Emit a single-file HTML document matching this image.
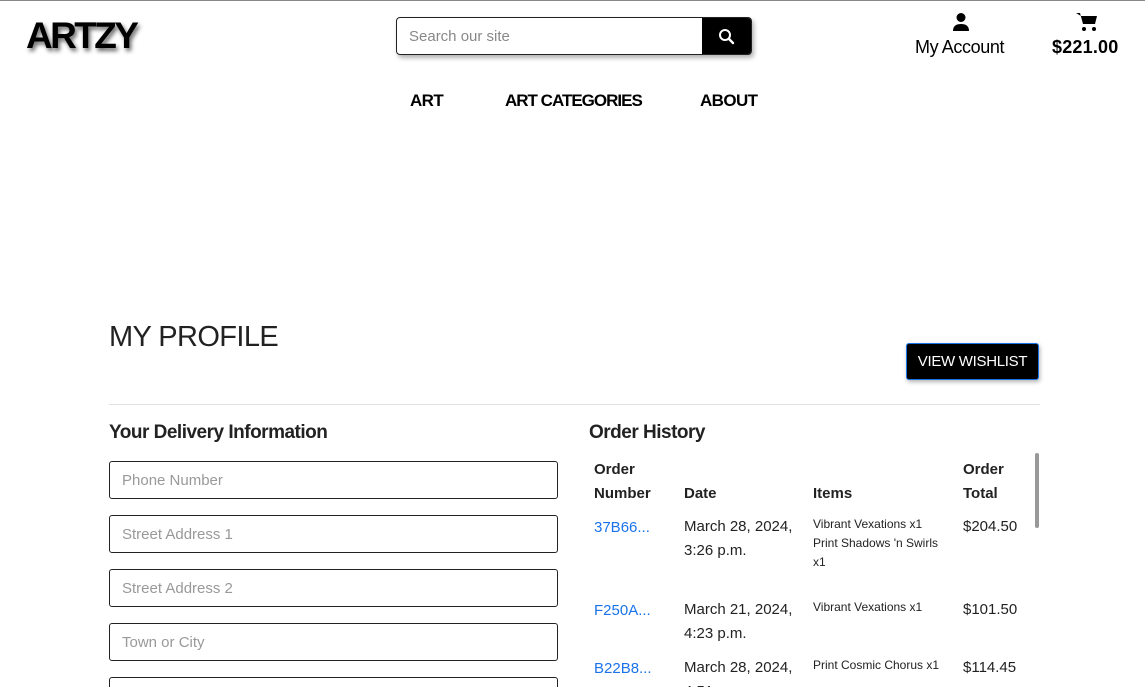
<!DOCTYPE html>
<html><head><meta charset="utf-8"><style>
*{box-sizing:border-box;margin:0;padding:0}
html,body{width:1145px;height:687px;overflow:hidden}
body{background:#fff;font-family:"Liberation Sans",sans-serif;color:#222;position:relative;border-top:1px solid #888}
.a{position:absolute;white-space:nowrap}
.logo{left:26px;top:14px;font-size:37px;font-weight:bold;color:#000;letter-spacing:-2.6px;text-shadow:2px 3px 4px rgba(0,0,0,.6)}
.search{left:396px;top:16px;width:356px;height:38px;border:1px solid #222;border-radius:4px;box-shadow:2px 3px 5px rgba(0,0,0,.3);overflow:hidden}
.search span{position:absolute;left:12px;top:10px;font-size:15px;color:#888}
.search b{position:absolute;right:0;top:0;width:49px;height:38px;background:#000}
.nav{top:90px;font-size:17px;font-weight:bold;color:#000;letter-spacing:-.6px}
.inp{position:absolute;left:109px;width:449px;height:38px;border:1px solid #222;border-radius:3px;font-size:15px;color:#999;padding:10px 12px}
.th{font-size:15px;font-weight:bold;color:#222;line-height:24px}
.td{font-size:15px;line-height:24px;color:#222}
.it{font-size:12px;line-height:19px;color:#222}
.lk{font-size:15px;color:#1a73e8}
</style></head><body>
<div class="a logo">ARTZY</div>
<div class="a search"><span>Search our site</span><b><svg width="49" height="38" viewBox="0 0 49 38"><circle cx="23" cy="17" r="5" fill="none" stroke="#fff" stroke-width="2"/><path d="M27 21l4 4" stroke="#fff" stroke-width="2.4" stroke-linecap="round"/></svg></b></div>
<svg class="a" style="left:951px;top:11px" width="20" height="20" viewBox="0 0 20 20"><circle cx="10" cy="5.5" r="4.5" fill="#000"/><path d="M2 19c0-5 3-7 8-7s8 2 8 7z" fill="#000"/></svg>
<div class="a" style="left:915px;top:36px;font-size:18px;color:#000;letter-spacing:-.4px">My Account</div>
<svg class="a" style="left:1075px;top:11px" width="24" height="20" viewBox="0 0 24 20"><path d="M1 1h4l3 11h12l2-8H6z" fill="#000"/><circle cx="9" cy="17" r="2" fill="#000"/><circle cx="19" cy="17" r="2" fill="#000"/></svg>
<div class="a" style="left:1052px;top:36px;font-size:18px;font-weight:bold;color:#000;letter-spacing:.2px">$221.00</div>
<div class="a nav" style="left:410px">ART</div>
<div class="a nav" style="left:505px;letter-spacing:-1px">ART CATEGORIES</div>
<div class="a nav" style="left:700px">ABOUT</div>
<div class="a" style="left:109px;top:320px;font-size:29px;color:#222;letter-spacing:-.6px">MY PROFILE</div>
<div class="a" style="left:906px;top:342px;width:133px;height:37px;background:#000;border:1px solid #1a73e8;border-radius:3px;color:#fff;font-size:15px;text-align:center;line-height:35px;box-shadow:1px 2px 4px rgba(0,0,0,.3);letter-spacing:-.3px">VIEW WISHLIST</div>
<div class="a" style="left:109px;top:403px;width:931px;height:1px;background:#e2e2e2"></div>
<div class="a" style="left:109px;top:421px;font-size:19px;font-weight:bold;letter-spacing:-.5px">Your Delivery Information</div>
<div class="inp" style="top:460px">Phone Number</div>
<div class="inp" style="top:514px">Street Address 1</div>
<div class="inp" style="top:568px">Street Address 2</div>
<div class="inp" style="top:622px">Town or City</div>
<div class="inp" style="top:676px"></div>
<div class="a" style="left:589px;top:421px;font-size:19px;font-weight:bold;letter-spacing:-.5px">Order History</div>
<div class="a" style="left:1035px;top:452px;width:4px;height:75px;background:#999;border-radius:2px"></div>
<div class="a th" style="left:594px;top:457px">Order<br>Number</div>
<div class="a th" style="left:684px;top:481px">Date</div>
<div class="a th" style="left:813px;top:481px">Items</div>
<div class="a th" style="left:963px;top:457px">Order<br>Total</div>
<div class="a lk" style="left:594px;top:518px">37B66...</div>
<div class="a td" style="left:684px;top:514px">March 28, 2024,<br>3:26 p.m.</div>
<div class="a it" style="left:813px;top:514px">Vibrant Vexations x1<br>Print Shadows 'n Swirls<br>x1</div>
<div class="a td" style="left:963px;top:514px">$204.50</div>
<div class="a lk" style="left:594px;top:601px">F250A...</div>
<div class="a td" style="left:684px;top:597px">March 21, 2024,<br>4:23 p.m.</div>
<div class="a it" style="left:813px;top:597px">Vibrant Vexations x1</div>
<div class="a td" style="left:963px;top:597px">$101.50</div>
<div class="a lk" style="left:594px;top:659px">B22B8...</div>
<div class="a td" style="left:684px;top:655px">March 28, 2024,<br>4:51 p.m.</div>
<div class="a it" style="left:813px;top:655px">Print Cosmic Chorus x1</div>
<div class="a td" style="left:963px;top:655px">$114.45</div>
</body></html>
